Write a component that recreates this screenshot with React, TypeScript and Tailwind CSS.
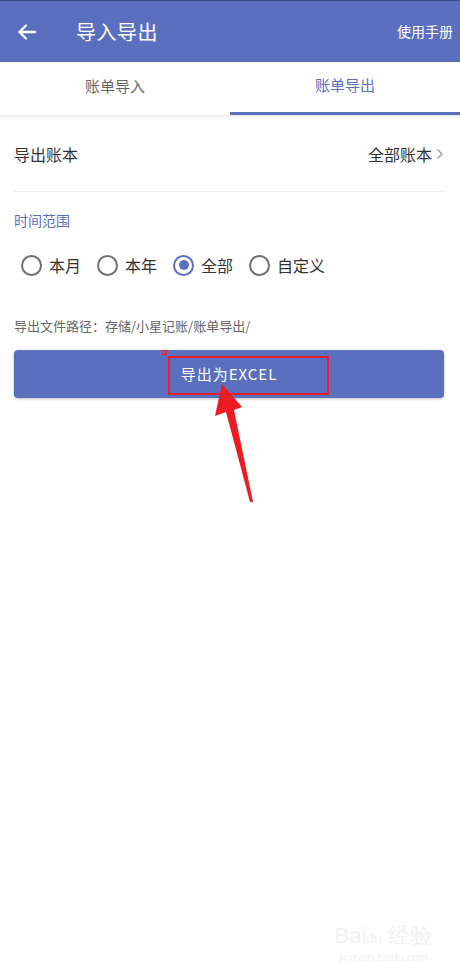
import React from 'react';

const font = { fontFamily: '"Noto Sans CJK SC", "Noto Sans", Roboto, sans-serif' };

function Radio({ label, checked }: { label: string; checked?: boolean }) {
  return (
    <div className="flex items-center gap-[7px]">
      <div
        className={
          checked
            ? 'w-[21px] h-[21px] rounded-full border-2 border-[#5a6fbe] flex items-center justify-center'
            : 'w-[21px] h-[21px] rounded-full border-2 border-[#6e6e6e]'
        }
      >
        {checked && <div className="w-[10px] h-[10px] rounded-full bg-[#5a6fbe]" />}
      </div>
      <span className="text-[16px] leading-[22px] text-[#333]">{label}</span>
    </div>
  );
}

export default function App() {
  return (
    <div className="relative w-[460px] h-[976px] bg-white overflow-hidden" style={font}>
      {/* Toolbar */}
      <header className="h-[62px] bg-[#5a6fbe] border-t border-[#3e4d87] flex items-center pl-[16px] pr-[7px]">
        <svg width="22" height="22" viewBox="0 0 22 22" fill="none" stroke="white" strokeWidth="2.4" strokeLinecap="round" strokeLinejoin="round">
          <path d="M19 11H3.5M10 4.5L3.5 11l6.5 6.5" />
        </svg>
        <h1 className="ml-[38px] text-[20px] text-white tracking-[0.5px]">导入导出</h1>
        <span className="ml-auto text-[14px] text-white">使用手册</span>
      </header>

      {/* Tabs */}
      <div className="h-[53px] flex bg-white shadow-[0_2px_3px_rgba(0,0,0,0.08)] relative">
        <div className="flex-1 flex items-center justify-center text-[15px] text-[#666] pb-[4px]">账单导入</div>
        <div className="flex-1 flex items-center justify-center text-[15px] text-[#5a6fbe] pb-[4px] border-b-[3px] border-[#5a6fbe]">
          账单导出
        </div>
      </div>

      <div className="px-[14px]">
        {/* Book row */}
        <div className="flex items-center pt-[28px] pb-[26px] border-b border-[#eeeeee] pr-[2px]">
          <span className="text-[16px] leading-[22px] text-[#333]">导出账本</span>
          <span className="ml-auto text-[16px] leading-[22px] text-[#333]">全部账本</span>
          <svg className="ml-[4px]" width="8" height="12" viewBox="0 0 8 12" fill="none" stroke="#9a9a9a" strokeWidth="1.3">
            <path d="M1.5 1.5L6 6l-4.5 4.5" />
          </svg>
        </div>

        <div className="mt-[18px] text-[14px] leading-[20px] text-[#5a6fbe]">时间范围</div>

        <div className="mt-[24px] pl-[7px] flex items-center gap-[16px]">
          <Radio label="本月" />
          <Radio label="本年" />
          <Radio label="全部" checked />
          <Radio label="自定义" />
        </div>

        <div className="mt-[41px] text-[13px] leading-[18px] text-[#666]">导出文件路径：存储/小星记账/账单导出/</div>

        <button className="mt-[15px] w-[430px] h-[48px] rounded-[4px] bg-[#5a6fbe] shadow-[0_1px_3px_rgba(0,0,0,0.25)] flex items-center justify-center text-white text-[15px] tracking-[1px]">
          导出为EXCEL
        </button>
      </div>

      {/* Annotation overlay */}
      <div className="absolute left-[168px] top-[356px] w-[161px] h-[39px] border-2 border-[#e8202a]" />
      <div className="absolute left-[162px] top-[350px] w-[5px] h-[5px] border border-[#e8202a]" />
      <svg className="absolute left-0 top-0" width="460" height="976" viewBox="0 0 460 976">
        <path d="M222 384 L242 407 L234 410 L253 502 L250 502 L226 412 L215 416 Z" fill="#ec1c24" />
      </svg>

      {/* Watermark */}
      <div className="absolute right-[28px] bottom-[12px] flex flex-col items-center text-[#f1f1f1]">
        <span className="text-[22px] leading-[24px]" style={{ fontFamily: '"Liberation Sans", sans-serif' }}>
          Bai<span className="text-[14px]">du</span> 经验
        </span>
        <span className="text-[11px] leading-[14px]" style={{ fontFamily: '"Liberation Sans", sans-serif' }}>jingyan.baidu.com</span>
      </div>
    </div>
  );
}
